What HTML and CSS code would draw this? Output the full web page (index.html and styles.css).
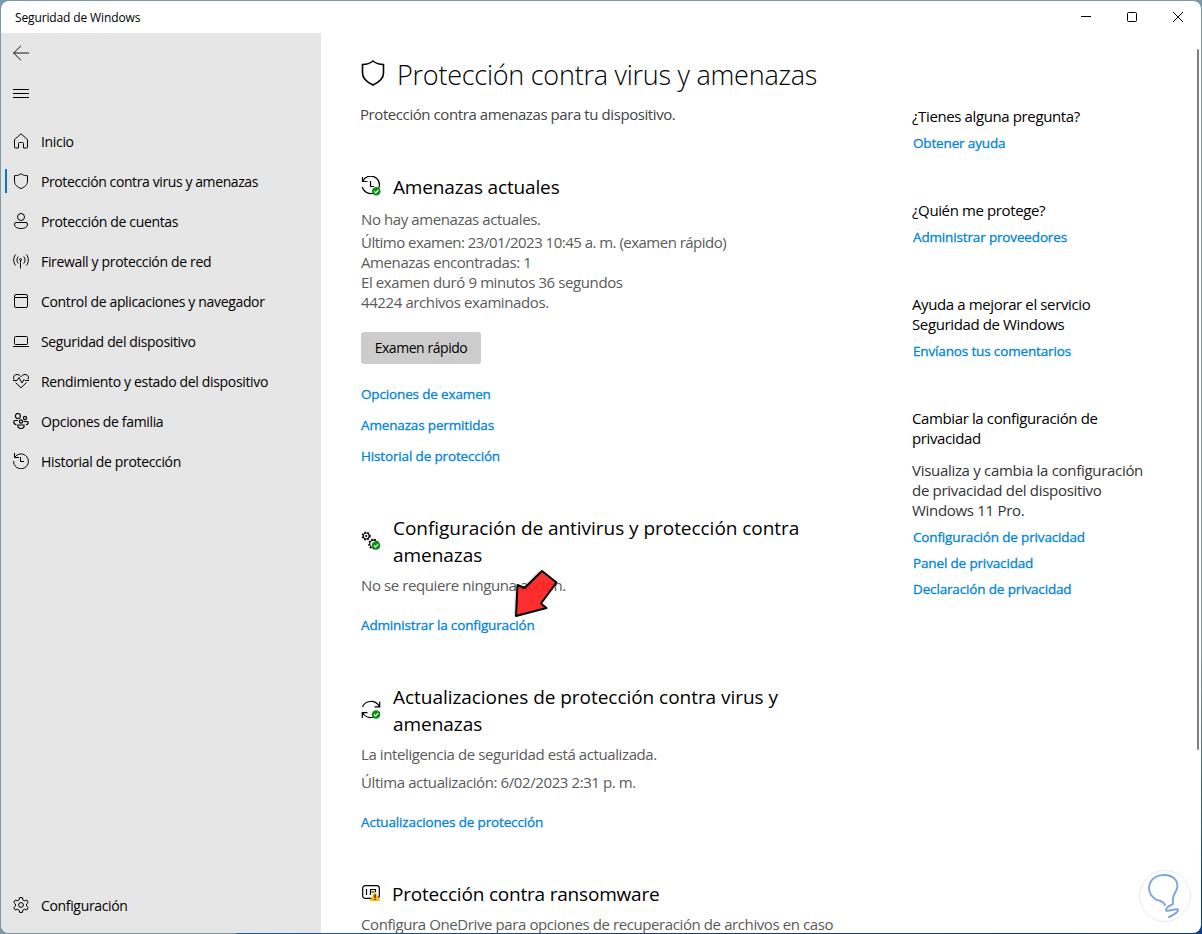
FILE: index.html
```
<!DOCTYPE html>
<html lang="es">
<head>
    <meta charset="UTF-8">
    <meta name="viewport" content="width=device-width, initial-scale=1.0">
    <title>Seguridad de Windows</title>
    <link rel="stylesheet" href="styles.css">
</head>
<body>

    <div class="window">
        <!-- Barra de título -->
        <header class="titlebar">
            <span class="titlebar-text">Seguridad de Windows</span>
            <div class="controls">
                <svg width="12" height="12" viewBox="0 0 12 12"><path d="M1 5.5h10"/></svg>
                <svg width="12" height="12" viewBox="0 0 12 12"><rect x="1.5" y="1.5" width="9" height="9" rx="1"/></svg>
                <svg width="12" height="12" viewBox="0 0 12 12"><path d="M1 1l10 10M11 1L1 11"/></svg>
            </div>
        </header>

        <div class="layout">
            <!-- Menú lateral -->
            <nav class="sidebar">
                <div class="nav-item">
                    <svg class="icon back" viewBox="0 0 16 16"><path d="M0.5 8H16M8 0.8L0.6 8L8 15.2"/></svg>
                </div>
                <div class="nav-item">
                    <svg class="icon" viewBox="0 0 16 16"><path d="M0 4.5h16M0 8.5h16M0 12.5h16"/></svg>
                </div>
                <div class="menu">
                    <a class="nav-item">
                        <svg class="icon" viewBox="0 0 16 16"><path d="M1.5 6.6L8 0.8l6.5 5.8V14a1 1 0 0 1-1 1H10.500V10.500a1 1 0 0 0-1-1h-3a1 1 0 0 0-1 1V15H2.500a1 1 0 0 1-1-1z"/></svg>
                        <span>Inicio</span>
                    </a>
                    <a class="nav-item active">
                        <svg class="icon" viewBox="0 0 16 16"><path d="M8 0.7C6 2.2 4 2.700 1.500 2.700V8c0 3.500 2.500 6 6.500 7.500C12 14 14.500 11.500 14.500 8V2.700C12 2.700 10 2.200 8 0.7z"/></svg>
                        <span>Protección contra virus y amenazas</span>
                    </a>
                    <a class="nav-item">
                        <svg class="icon" viewBox="0 0 16 16"><circle cx="8" cy="4" r="3.5"/><path d="M3 9.500h10a1.500 1.500 0 0 1 1.500 1.500c0 3-2.500 4.500-6.500 4.500S1.500 14 1.500 11A1.500 1.500 0 0 1 3 9.500z"/></svg>
                        <span>Protección de cuentas</span>
                    </a>
                    <a class="nav-item">
                        <svg class="icon" viewBox="0 0 16 16"><path d="M2.700 1.500C0 4.500 0 9.500 2.700 12.500M13.300 1.500c2.700 3 2.700 8 0 11M5.300 3.500c-1.800 2-1.800 5 0 7M10.700 3.500c1.800 2 1.800 5 0 7M7.500 7v8.500"/><circle cx="7.600" cy="6.500" r="1"/></svg>
                        <span>Firewall y protección de red</span>
                    </a>
                    <a class="nav-item">
                        <svg class="icon" viewBox="0 0 16 16"><rect x="1.500" y="1.500" width="13" height="13" rx="1.500"/><path d="M1.500 4.500h13"/></svg>
                        <span>Control de aplicaciones y navegador</span>
                    </a>
                    <a class="nav-item">
                        <svg class="icon" viewBox="0 0 16 16"><rect x="1.500" y="3.500" width="13" height="8" rx="1"/><path d="M0 13.500h16"/></svg>
                        <span>Seguridad del dispositivo</span>
                    </a>
                    <a class="nav-item">
                        <svg class="icon" viewBox="0 0 16 16"><path d="M0.800 6.500C0 3 1.500 1.500 4 1.500c1.500 0 3 0.800 4 2.200c1-1.400 2.500-2.200 4-2.200c2.500 0 4 1.500 3.200 5M0 7.500h4l2-3 3 5.500 2-3.500 1 1h4M2.500 9.500L8 14.800l5.500-5.300"/></svg>
                        <span>Rendimiento y estado del dispositivo</span>
                    </a>
                    <a class="nav-item">
                        <svg class="icon family" viewBox="0 0 16 16"><circle cx="4.900" cy="3" r="2.500"/><circle cx="12" cy="5" r="1.600"/><circle cx="8" cy="8.500" r="1.600"/><path d="M5 7.500H2a1.200 1.200 0 0 0-1.200 1.200c0 1.600 1 2.800 2.700 3M10.500 8.500h3.800a0.900 0.900 0 0 1 0.900 0.900c0 1.200-0.800 2.100-2.200 2.300M5 12h6c0.500 2.300-1 3.500-3 3.500S4.500 14.300 5 12z"/></svg>
                        <span>Opciones de familia</span>
                    </a>
                    <a class="nav-item">
                        <svg class="icon" viewBox="0 0 16 16"><path d="M1.500 0v4.500H6M1.800 4.300A7.400 7.400 0 1 1 0.600 8M7.500 4v4.500H11"/></svg>
                        <span>Historial de protección</span>
                    </a>
                </div>
                <a class="nav-item settings">
                    <svg class="icon" viewBox="0 0 16 16"><path d="M6.600 0.600h2.800l0.500 2.300 1.500 0.900 2.300-0.800 1.500 2.400L13.500 7v2l1.700 1.600-1.500 2.400-2.300-0.800-1.500 0.900-0.500 2.300H6.600l-0.500-2.300-1.500-0.900L2.300 13 0.800 10.600 2.500 9V7L0.800 5.400 2.300 3l2.300 0.800 1.500-0.900z"/><circle cx="8" cy="8" r="2.400"/></svg>
                    <span>Configuración</span>
                </a>
            </nav>

            <!-- Contenido principal -->
            <main class="content">
                <div class="page-title">
                    <svg width="26" height="28" viewBox="0 0 26 28"><path d="M13 2C10 4.500 6.500 5.500 2.500 5.500V14c0 5.500 4 9 10.500 12 6.500-3 10.500-6.500 10.500-12V5.500C19.500 5.500 16 4.500 13 2z"/></svg>
                    <h1>Protección contra virus y amenazas</h1>
                </div>
                <p class="subtitle">Protección contra amenazas para tu dispositivo.</p>

                <section class="block threats">
                    <div class="block-title">
                        <svg class="block-icon" viewBox="0 0 20 20"><path d="M1.500 1V5.500H6.500M1.800 5.200A8.700 8.700 0 1 1 1.300 11M9.500 5v5.500H13"/><circle class="badge" cx="15.300" cy="15.300" r="4.300"/><path class="tick" d="M13.300 15.300l1.500 1.500 2.700-2.800"/></svg>
                        <h2>Amenazas actuales</h2>
                    </div>
                    <p class="status">No hay amenazas actuales.</p>
                    <div class="details">
                        <p class="last-scan">Último examen: 23/01/2023 10:45 a. m. (examen rápido)</p>
                        <p>Amenazas encontradas: 1</p>
                        <p>El examen duró 9 minutos 36 segundos</p>
                        <p>44224 archivos examinados.</p>
                    </div>
                    <button class="button">Examen rápido</button>
                    <div class="links">
                        <a>Opciones de examen</a>
                        <a>Amenazas permitidas</a>
                        <a>Historial de protección</a>
                    </div>
                </section>

                <section class="block">
                    <div class="block-title">
                        <svg class="block-icon" viewBox="0 0 20 20"><circle cx="5.200" cy="5" r="3"/><circle class="teeth" cx="5.200" cy="5" r="3.900"/><circle cx="5.200" cy="5" r="0.500"/><circle cx="12.500" cy="13" r="3.800"/><circle class="teeth" cx="12.500" cy="13" r="4.700"/><circle class="badge" cx="15" cy="14.500" r="4.300"/><path class="tick" d="M13 14.500l1.500 1.500 2.700-2.800"/></svg>
                        <h2>Configuración de antivirus y protección contra amenazas</h2>
                    </div>
                    <p class="status">No se requiere ninguna acción.</p>
                    <div class="links">
                        <a class="manage">Administrar la configuración
                            <svg class="pointer" width="50" height="54" viewBox="0 0 50 54"><path class="shadow" d="M2 49L3 18 11 21 26 4 43 17 27 36 33 42z"/><path d="M4 49L5.500 18 12.500 21 30 4 44.500 15.500 29 36.500 34.500 41z"/></svg>
                        </a>
                    </div>
                </section>

                <section class="block">
                    <div class="block-title">
                        <svg class="block-icon" viewBox="0 0 20 20"><path d="M1.500 7C4 0.500 14-1 18.500 6.500M18.700 1.500v5.300h-5.200M18.500 12C16 18.500 6 20 1.500 12.700M1.300 18v-5.300h5.200"/><circle class="badge" cx="15" cy="14.500" r="4.300"/><path class="tick" d="M13 14.500l1.500 1.500 2.700-2.800"/></svg>
                        <h2>Actualizaciones de protección contra virus y amenazas</h2>
                    </div>
                    <p class="status">La inteligencia de seguridad está actualizada.</p>
                    <p class="status">Última actualización: 6/02/2023 2:31 p. m.</p>
                    <div class="links">
                        <a>Actualizaciones de protección</a>
                    </div>
                </section>

                <section class="block ransomware">
                    <div class="block-title">
                        <svg class="block-icon" viewBox="0 0 20 20"><rect x="1.700" y="2.700" width="16.600" height="12.600" rx="2.500"/><path d="M5.500 6v6M9.500 12V6.500h5V9M10.500 9h3"/><path class="warning" d="M14 8.500L19.500 18H8.500z"/><path d="M14 11.500v3.200M14 15.800v1.300"/></svg>
                        <h2>Protección contra ransomware</h2>
                    </div>
                    <p class="status">Configura OneDrive para opciones de recuperación de archivos en caso</p>
                </section>
            </main>

            <!-- Columna de ayuda -->
            <aside class="help">
                <section>
                    <h3>¿Tienes alguna pregunta?</h3>
                    <a>Obtener ayuda</a>
                </section>
                <section>
                    <h3>¿Quién me protege?</h3>
                    <a>Administrar proveedores</a>
                </section>
                <section>
                    <h3>Ayuda a mejorar el servicio<br>Seguridad de Windows</h3>
                    <a>Envíanos tus comentarios</a>
                </section>
                <section>
                    <h3>Cambiar la configuración de<br>privacidad</h3>
                    <p>Visualiza y cambia la configuración<br>de privacidad del dispositivo<br>Windows 11 Pro.</p>
                    <a>Configuración de privacidad</a>
                    <a>Panel de privacidad</a>
                    <a>Declaración de privacidad</a>
                </section>
            </aside>
        </div>

        <div class="scrollbar"></div>
        <svg class="watermark" width="54" height="54" viewBox="0 0 54 54"><circle cx="27" cy="27" r="25.500"/><path d="M27 36c-2-5-6-3.500-10-6C6 22 11 6 26 6c11 0 16 8 12 16-3 5-4 8-3 12M35 35c-3 2-7 3-7 6s12-3 12 0-5 5-9 7"/></svg>
    </div>

</body>
</html>
```
FILE: styles.css
```
* {
    box-sizing: border-box;
}
body {
    margin: 0;
    height: 934px;
    overflow: hidden;
    padding: 1px;
    background: linear-gradient(to bottom, #7a98a8 0, #7a98a8 70%, transparent 95%), linear-gradient(to right, #7a98a8 0, #7a98a8 236px, #0d62a0 237px, #1c3f7a 600px, #0a3c82 100%);
    font-family: "Open Sans", "Noto Sans", sans-serif;
    font-size: 15px;
    line-height: 20px;
    color: #111;
}
h1, h2, h3, p {
    margin: 0;
    font-weight: 400;
}
svg {
    display: block;
    flex: none;
    fill: none;
    stroke: #000;
}
a {
    color: #0084d8;
}
.window {
    position: relative;
    display: flex;
    flex-direction: column;
    width: 1200px;
    height: 932px;
    background-color: #fff;
    border-radius: 8px;
    overflow: hidden;
}
.titlebar {
    display: flex;
    justify-content: space-between;
    align-items: center;
    flex: none;
    height: 32px;
    padding: 0 17px 0 14px;
}
.titlebar-text {
    padding-top: 2px;
    font-size: 12px;
    letter-spacing: -0.13px;
    color: #000;
}
.controls {
    display: flex;
    gap: 34px;
}
.layout {
    display: flex;
    flex: 1;
    min-height: 0;
}

/* Menú lateral */
.sidebar {
    display: flex;
    flex-direction: column;
    flex: none;
    width: 320px;
    padding-bottom: 8px;
    background-color: #e6e6e6;
    font-size: 14px;
    letter-spacing: -0.34px;
}
.menu {
    margin-top: 8px;
}
.nav-item {
    display: flex;
    align-items: center;
    gap: 12px;
    height: 40px;
    padding-left: 12px;
    color: #000;
}
.nav-item span {
    padding-top: 2px;
}
.active {
    padding-left: 4px;
    gap: 0;
}
.active::before {
    content: "";
    width: 2px;
    height: 24px;
    margin-right: 6px;
    background-color: #0078d4;
}
.active span {
    margin-left: 12px;
    letter-spacing: -0.4px;
}
.settings {
    margin-top: auto;
}
.icon {
    width: 16px;
    height: 16px;
}
.back {
    stroke-width: 0.900;
}
.family {
    stroke-width: 1.200;
}

/* Contenido principal */
.content {
    flex: none;
    width: 500px;
    margin-left: 40px;
    padding-top: 24px;
}
.page-title {
    display: flex;
    gap: 11px;
    height: 36px;
}
.page-title svg {
    margin: 2px 0 0 -1px;
    stroke-width: 1.600;
}
h1 {
    font-size: 27px;
    font-weight: 300;
    line-height: 36px;
    letter-spacing: -0.25px;
    white-space: nowrap;
    color: #000;
}
.subtitle {
    margin: 11px 0 50px -1px;
    color: #444;
    letter-spacing: -0.42px;
}
.block {
    margin-bottom: 49px;
}
.block-title {
    display: flex;
    align-items: center;
    gap: 12px;
    width: 450px;
    margin-bottom: 6px;
}
.block-icon {
    width: 20px;
    height: 20px;
    margin-top: -3px;
    stroke-width: 1.200;
}
.badge {
    fill: #0c9016;
    stroke: none;
}
.tick {
    stroke: #fff;
}
.teeth {
    stroke-dasharray: 1.600 1.600;
}
.warning {
    fill: #fdb813;
    stroke: none;
}
h2 {
    font-size: 19px;
    line-height: 27px;
    letter-spacing: -0.04px;
    color: #000;
}
.status, .details {
    color: #5a5a5a;
    letter-spacing: -0.4px;
    white-space: nowrap;
}
.status + .status {
    margin-top: 8px;
}
.threats .block-title {
    margin-bottom: 8px;
}
.threats h2 {
    letter-spacing: -0.15px;
}
.ransomware .block-title {
    gap: 11px;
}
.ransomware h2 {
    letter-spacing: -0.2px;
}
.details {
    margin-top: 3px;
}
.last-scan {
    letter-spacing: -0.52px;
}
.button {
    display: block;
    width: 120px;
    height: 32px;
    margin: 20px 0;
    padding: 0;
    border: none;
    border-radius: 3px;
    background-color: #ccc;
    font: inherit;
    font-size: 14px;
    letter-spacing: -0.45px;
    color: #000;
}
.links {
    display: flex;
    flex-direction: column;
    align-items: flex-start;
    gap: 11px;
    margin-top: 20px;
}
.links a, .help a {
    font-size: 13.500px;
    letter-spacing: -0.15px;
    -webkit-text-stroke: 0.300px #0084d8;
}
.manage {
    position: relative;
}
/* Flecha roja sobre el enlace */
.pointer {
    position: absolute;
    left: 151px;
    top: -48px;
    stroke-width: 2;
    stroke-linejoin: round;
    fill: rgba(255, 32, 32, 0.92);
}
.pointer .shadow {
    fill: rgba(0, 0, 0, 0.15);
    stroke: none;
}

/* Columna de ayuda */
.help {
    flex: none;
    width: 240px;
    margin-left: 51px;
    padding-top: 73px;
}
.help section {
    display: flex;
    flex-direction: column;
    gap: 6px;
    margin-bottom: 47px;
}
.help h3 {
    margin-bottom: 1px;
    font-size: 15px;
    letter-spacing: -0.38px;
    color: #000;
}
.help p {
    margin: 5px 0 1px;
    color: #333;
    letter-spacing: -0.3px;
}
.help a {
    margin-left: 1px;
}
.scrollbar {
    position: absolute;
    left: 1196px;
    top: 48px;
    width: 2px;
    height: 701px;
    border-radius: 1px;
    background-color: #808080;
}
.watermark {
    position: absolute;
    right: 9px;
    bottom: 10px;
    stroke: #7ba7db;
    stroke-width: 2;
    stroke-linecap: round;
}
.watermark circle {
    stroke: #e3ebf5;
    stroke-width: 1;
}
```
